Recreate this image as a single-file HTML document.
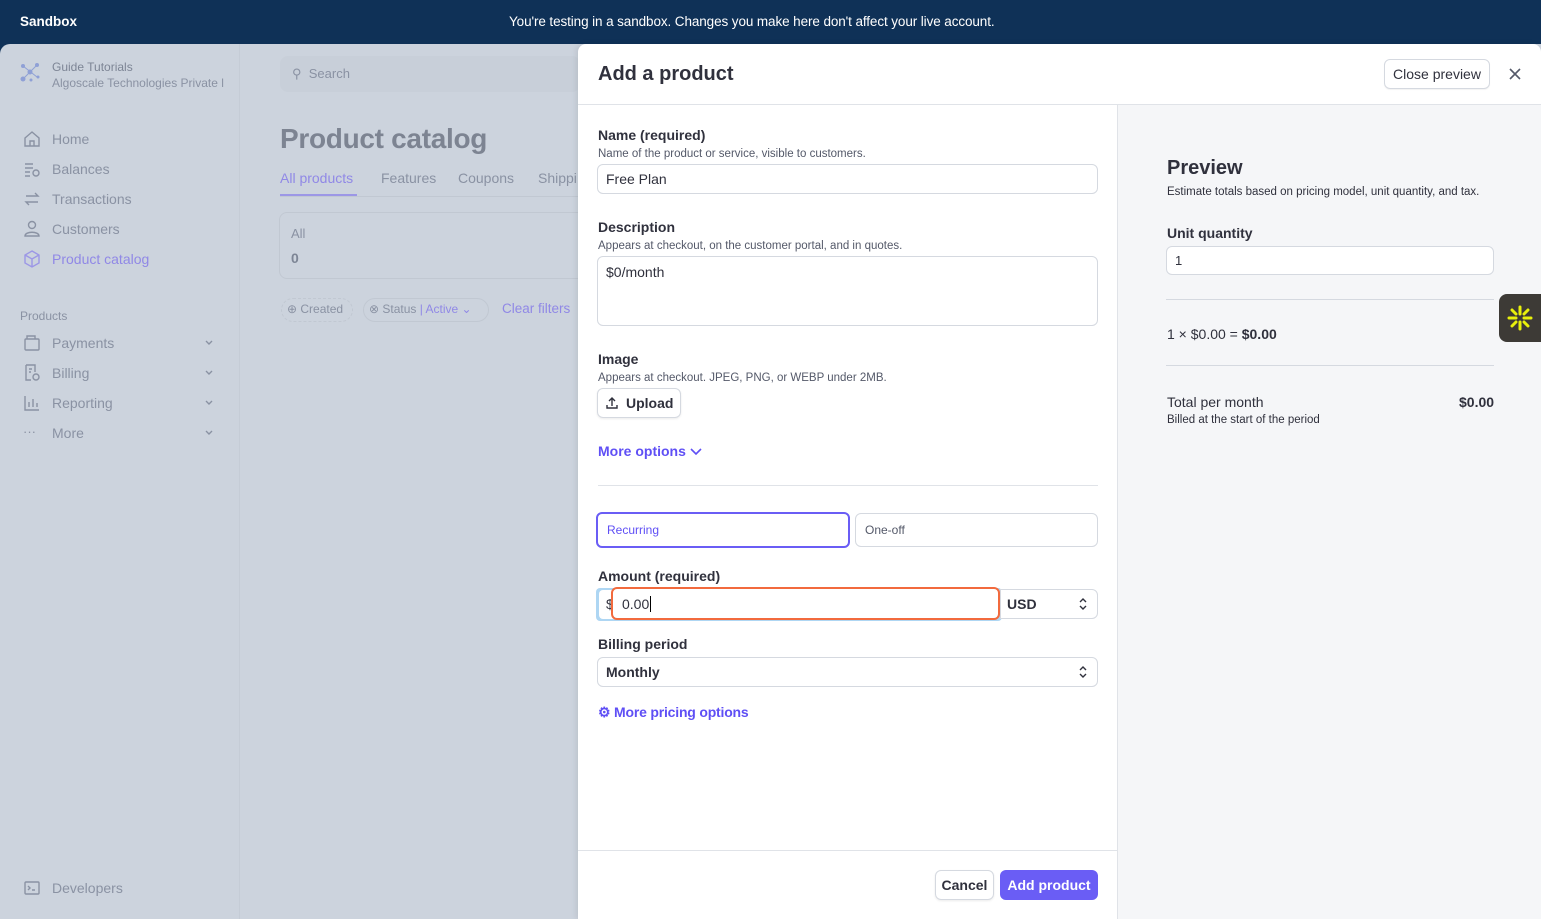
<!DOCTYPE html>
<html><head><meta charset="utf-8"><style>
*{box-sizing:border-box;margin:0;padding:0}
body{width:1541px;height:919px;overflow:hidden;background:#0f3157;font-family:"Liberation Sans",sans-serif;position:relative;color:#30313d}
.a{position:absolute;white-space:nowrap}
.bg{position:absolute;left:0;top:44px;width:1541px;height:875px;background:#ccd3dd;border-radius:10px 0 0 0}
.g{color:#8a92a3}
.inp{position:absolute;background:#fff;border:1px solid #d5d9e0;border-radius:6px;font-size:14px;padding-left:8px;display:flex;align-items:center}
.lbl{font-size:14px;font-weight:bold;color:#30313d}
.sub{font-size:11.5px;color:#545969}
.blue{color:#5f4ff5}
</style></head><body>
<div class="a" style="left:20px;top:14px;color:#fff;font-weight:bold;font-size:13.5px">Sandbox</div>
<div class="a" style="left:509px;top:14px;color:#fff;font-size:13.5px;letter-spacing:-0.1px">You're testing in a sandbox. Changes you make here don't affect your live account.</div>
<div class="bg"></div>
<div class="a" style="left:239px;top:44px;width:1px;height:875px;background:#c5ccd6"></div>
<svg class="a" style="left:20px;top:62px" width="22" height="22"><g fill="#8fa0d6"><circle cx="3" cy="4" r="2"/><circle cx="17" cy="3" r="2"/><circle cx="10" cy="10" r="2.5"/><circle cx="3" cy="17" r="2.5"/><circle cx="11" cy="18" r="1.5"/><circle cx="18" cy="15" r="1.5"/></g><path d="M3 4L17 15M17 3L3 17" stroke="#8fa0d6" stroke-width="1"/></svg>
<div class="a g" style="left:52px;top:60px;font-size:12px;color:#7d8595">Guide Tutorials</div>
<div class="a g" style="left:52px;top:76px;font-size:12px">Algoscale Technologies Private l</div>
<svg class="a" style="left:23px;top:130px" width="18" height="18" fill="none" stroke="#8a92a3" stroke-width="1.4"><path d="M2 8L9 2L16 8V16H2Z M7 16V11H11V16"/></svg>
<div class="a g" style="left:52px;top:131px;font-size:14px">Home</div>
<svg class="a" style="left:23px;top:160px" width="18" height="18" fill="none" stroke="#8a92a3" stroke-width="1.4"><path d="M2 4H10M2 8H10M2 12H7M2 16H7"/><circle cx="13" cy="13" r="3"/></svg>
<div class="a g" style="left:52px;top:161px;font-size:14px">Balances</div>
<svg class="a" style="left:23px;top:190px" width="18" height="18" fill="none" stroke="#8a92a3" stroke-width="1.4"><path d="M3 6H15L12 3M15 12H3L6 15"/></svg>
<div class="a g" style="left:52px;top:191px;font-size:14px">Transactions</div>
<svg class="a" style="left:23px;top:220px" width="18" height="18" fill="none" stroke="#8a92a3" stroke-width="1.4"><circle cx="9" cy="5" r="3.5"/><path d="M2 16C2 11 16 11 16 16Z"/></svg>
<div class="a g" style="left:52px;top:221px;font-size:14px">Customers</div>
<svg class="a" style="left:23px;top:250px" width="18" height="18" fill="none" stroke="#9c97e6" stroke-width="1.4"><path d="M9 1L16 5V13L9 17L2 13V5Z M2 5L9 9L16 5M9 9V17"/></svg>
<div class="a" style="left:52px;top:251px;font-size:14px;color:#9088e6">Product catalog</div>
<div class="a g" style="left:20px;top:309px;font-size:12px">Products</div>
<div class="a g" style="left:52px;top:335px;font-size:14px">Payments</div>
<div class="a g" style="left:52px;top:365px;font-size:14px">Billing</div>
<div class="a g" style="left:52px;top:395px;font-size:14px">Reporting</div>
<div class="a g" style="left:52px;top:425px;font-size:14px">More</div>
<svg class="a" style="left:23px;top:334px" width="18" height="18" fill="none" stroke="#8a92a3" stroke-width="1.4"><rect x="2" y="5" width="14" height="11" rx="1"/><path d="M4 5V2H12V5"/></svg>
<svg class="a" style="left:23px;top:364px" width="18" height="18" fill="none" stroke="#8a92a3" stroke-width="1.4"><path d="M3 1H12V8M3 1V16H8M6 5H9M6 8H8"/><circle cx="13" cy="13" r="3"/></svg>
<svg class="a" style="left:23px;top:394px" width="18" height="18" fill="none" stroke="#8a92a3" stroke-width="1.4"><path d="M2 2V16H16M6 13V8M10 13V5M14 13V9"/></svg>
<div class="a g" style="left:23px;top:424px;font-size:13px">···</div>
<svg class="a" style="left:204px;top:338px" width="10" height="10" fill="none" stroke="#8a92a3" stroke-width="1.4"><path d="M2 3L5 6L8 3"/></svg>
<svg class="a" style="left:204px;top:368px" width="10" height="10" fill="none" stroke="#8a92a3" stroke-width="1.4"><path d="M2 3L5 6L8 3"/></svg>
<svg class="a" style="left:204px;top:398px" width="10" height="10" fill="none" stroke="#8a92a3" stroke-width="1.4"><path d="M2 3L5 6L8 3"/></svg>
<svg class="a" style="left:204px;top:428px" width="10" height="10" fill="none" stroke="#8a92a3" stroke-width="1.4"><path d="M2 3L5 6L8 3"/></svg>
<svg class="a" style="left:23px;top:879px" width="18" height="18" fill="none" stroke="#8a92a3" stroke-width="1.4"><rect x="2" y="3" width="14" height="12" rx="1"/><path d="M5 7L7 9L5 11M9 11H12"/></svg>
<div class="a g" style="left:52px;top:880px;font-size:14px">Developers</div>
<div class="a" style="left:280px;top:56px;width:300px;height:36px;background:#c8cfd9;border-radius:8px"></div>
<div class="a g" style="left:292px;top:66px;font-size:13px">⚲ &nbsp;Search</div>
<div class="a" style="left:280px;top:123px;font-size:28px;font-weight:bold;color:#7d8492;letter-spacing:-0.3px">Product catalog</div>
<div class="a" style="left:280px;top:170px;font-size:14px;color:#9088e6">All products</div>
<div class="a" style="left:280px;top:194px;width:77px;height:2px;background:#9c97e6"></div>
<div class="a" style="left:280px;top:196px;width:300px;height:1px;background:#c1c8d2"></div>
<div class="a g" style="left:381px;top:170px;font-size:14px">Features</div>
<div class="a g" style="left:458px;top:170px;font-size:14px">Coupons</div>
<div class="a g" style="left:538px;top:170px;font-size:14px">Shippi</div>
<div class="a" style="left:279px;top:212px;width:310px;height:67px;border:1px solid #c1c8d2;border-radius:8px"></div>
<div class="a g" style="left:291px;top:226px;font-size:13px">All</div>
<div class="a" style="left:291px;top:250px;font-size:14px;font-weight:bold;color:#7d8595">0</div>
<div class="a" style="left:281px;top:298px;width:72px;height:24px;border:1px dashed #c1c8d2;border-radius:12px"></div>
<div class="a g" style="left:287px;top:302px;font-size:12px">⊕ Created</div>
<div class="a" style="left:363px;top:298px;width:126px;height:24px;border:1px solid #c1c8d2;border-radius:12px"></div>
<div class="a g" style="left:369px;top:302px;font-size:12px">⊗ Status <span style="color:#9088e6">| Active ⌄</span></div>
<div class="a" style="left:502px;top:301px;font-size:13.5px;color:#9088e6">Clear filters</div>
<div class="a" style="left:578px;top:44px;width:963px;height:875px;background:#fff;border-radius:8px 8px 0 0;box-shadow:-2px 0 6px rgba(0,0,0,.08)"></div>
<div class="a" style="left:598px;top:63px;font-size:20px;font-weight:bold;color:#30313d">Add a product</div>
<div class="a" style="left:1384px;top:59px;width:106px;height:30px;border:1px solid #d5d9e0;border-radius:6px;font-size:14px;display:flex;align-items:center;justify-content:center;color:#30313d;box-shadow:0 1px 1px rgba(0,0,0,.05)">Close preview</div>
<svg class="a" style="left:1509px;top:68px" width="12" height="12" stroke="#545969" stroke-width="1.6"><path d="M1 1L11 11M11 1L1 11"/></svg>
<div class="a" style="left:578px;top:104px;width:963px;height:1px;background:#e0e3e8"></div>
<div class="a" style="left:1117px;top:105px;width:424px;height:814px;background:#f5f6f8;border-left:1px solid #e0e3e8"></div>
<div class="a lbl" style="left:598px;top:127px">Name (required)</div>
<div class="a sub" style="left:598px;top:148px">Name of the product or service, visible to customers.</div>
<div class="inp" style="left:597px;top:164px;width:501px;height:30px">Free Plan</div>
<div class="a lbl" style="left:598px;top:219px">Description</div>
<div class="a sub" style="left:598px;top:240px">Appears at checkout, on the customer portal, and in quotes.</div>
<div class="inp" style="left:597px;top:256px;width:501px;height:70px;align-items:flex-start;padding-top:7px">$0/month</div>
<div class="a lbl" style="left:598px;top:351px">Image</div>
<div class="a sub" style="left:598px;top:372px">Appears at checkout. JPEG, PNG, or WEBP under 2MB.</div>
<div class="a" style="left:597px;top:388px;width:84px;height:30px;border:1px solid #d5d9e0;border-radius:6px;font-size:14px;font-weight:bold;display:flex;align-items:center;padding-left:8px;box-shadow:0 1px 2px rgba(0,0,0,.08)"><svg width="12" height="12" fill="none" stroke="#30313d" stroke-width="1.4" style="margin-right:8px"><path d="M6 9V1M3 4L6 1L9 4M1 8V11H11V8"/></svg>Upload</div>
<div class="a blue" style="left:598px;top:443px;font-size:14px;font-weight:bold">More options <svg width="12" height="10" fill="none" stroke="#5f4ff5" stroke-width="1.6"><path d="M1 3L6 8L11 3"/></svg></div>
<div class="a" style="left:598px;top:485px;width:500px;height:1px;background:#e0e3e8"></div>
<div class="a" style="left:596px;top:512px;width:254px;height:36px;border:2px solid #6a5df5;border-radius:6px;font-size:12px;color:#5f4ff5;display:flex;align-items:center;padding-left:9px">Recurring</div>
<div class="a" style="left:855px;top:513px;width:243px;height:34px;border:1px solid #d5d9e0;border-radius:6px;font-size:12px;color:#545969;display:flex;align-items:center;padding-left:9px">One-off</div>
<div class="a lbl" style="left:598px;top:568px">Amount (required)</div>
<div class="a" style="left:596px;top:588px;width:406px;height:33px;background:#aed6f3;border-radius:4px"></div>
<div class="a" style="left:599px;top:590px;width:400px;height:29px;background:#fff;border-radius:4px"></div>
<div class="a" style="left:606px;top:596px;font-size:14px;color:#30313d">$</div>
<div class="a" style="left:611px;top:587px;width:389px;height:33px;border:2px solid #f26a3d;border-radius:6px;background:#fff;font-size:14px;padding:7px 0 0 9px">0.00<span style="border-left:1px solid #000;margin-left:1px"></span></div>
<div class="inp" style="left:1000px;top:589px;width:98px;height:30px;border-radius:0 6px 6px 0;font-weight:bold;padding-left:6px">USD<svg style="position:absolute;right:9px" width="10" height="14" fill="none" stroke="#30313d" stroke-width="1.4"><path d="M2 5L5 2L8 5M2 9L5 12L8 9"/></svg></div>
<div class="a lbl" style="left:598px;top:636px">Billing period</div>
<div class="inp" style="left:597px;top:657px;width:501px;height:30px;font-weight:bold">Monthly<svg style="position:absolute;right:9px" width="10" height="14" fill="none" stroke="#30313d" stroke-width="1.4"><path d="M2 5L5 2L8 5M2 9L5 12L8 9"/></svg></div>
<div class="a blue" style="left:598px;top:704px;font-size:14px;font-weight:bold;letter-spacing:-0.2px">⚙ More pricing options</div>
<div class="a" style="left:578px;top:850px;width:539px;height:1px;background:#e0e3e8"></div>
<div class="a" style="left:935px;top:870px;width:59px;height:30px;border:1px solid #d5d9e0;border-radius:6px;font-size:14px;font-weight:bold;display:flex;align-items:center;justify-content:center;box-shadow:0 1px 2px rgba(0,0,0,.08)">Cancel</div>
<div class="a" style="left:1000px;top:870px;width:98px;height:30px;background:#6a5df5;border-radius:6px;font-size:14px;font-weight:bold;color:#fff;display:flex;align-items:center;justify-content:center">Add product</div>
<div class="a" style="left:1167px;top:157px;font-size:20px;font-weight:bold">Preview</div>
<div class="a sub" style="left:1167px;top:186px;color:#30313d">Estimate totals based on pricing model, unit quantity, and tax.</div>
<div class="a lbl" style="left:1167px;top:225px">Unit quantity</div>
<div class="inp" style="left:1166px;top:246px;width:328px;height:29px;font-size:13px">1</div>
<div class="a" style="left:1166px;top:299px;width:328px;height:1px;background:#d5d9e0"></div>
<div class="a" style="left:1167px;top:326px;font-size:14px">1 × $0.00 = <b>$0.00</b></div>
<div class="a" style="left:1166px;top:365px;width:328px;height:1px;background:#d5d9e0"></div>
<div class="a" style="left:1167px;top:394px;font-size:14px">Total per month</div>
<div class="a" style="left:1459px;top:394px;font-size:14px;font-weight:bold">$0.00</div>
<div class="a sub" style="left:1167px;top:414px;color:#30313d">Billed at the start of the period</div>
<div class="a" style="left:1499px;top:294px;width:42px;height:48px;background:#3d3a36;border-radius:8px 0 0 8px;display:flex;align-items:center;justify-content:center"><svg width="26" height="26" stroke="#e8f00c" stroke-width="3" stroke-linecap="round"><path d="M13 2V9M13 17V24M2 13H9M17 13H24M5 5L9 9M17 17L21 21M21 5L17 9M9 17L5 21"/></svg></div>
</body></html>
